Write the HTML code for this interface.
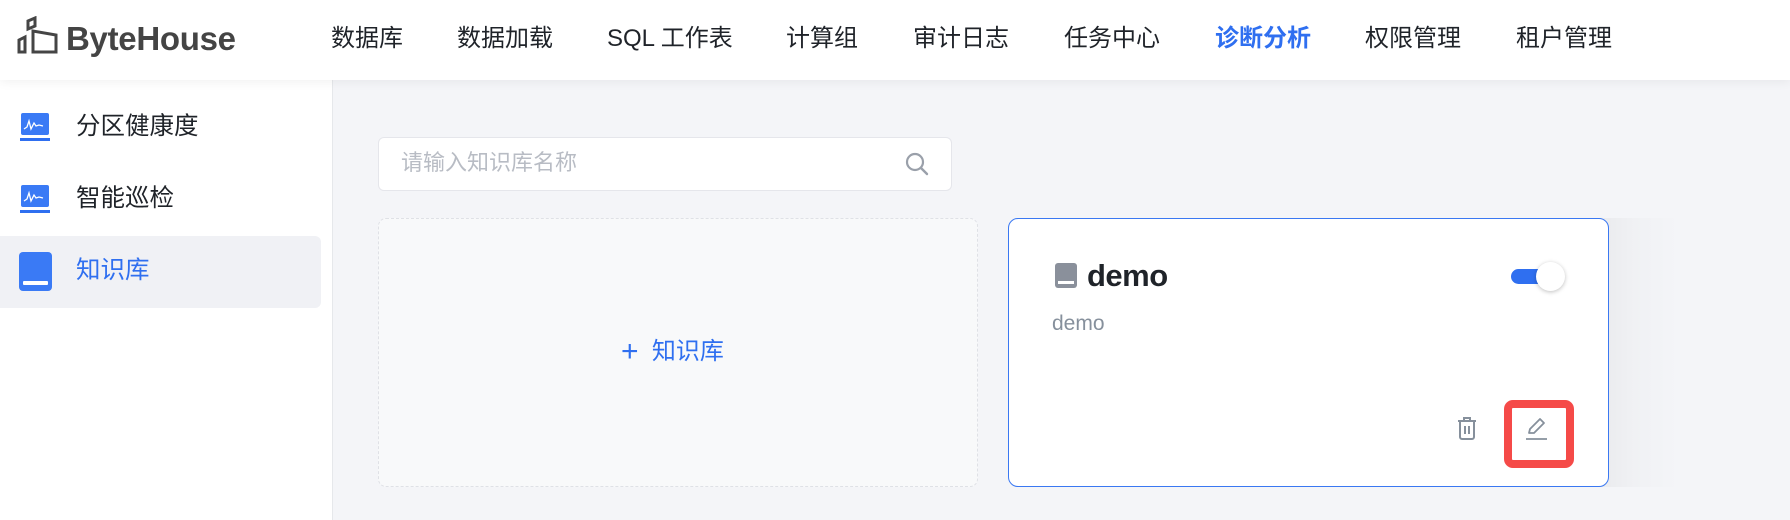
<!DOCTYPE html>
<html><head><meta charset="utf-8"><style>
*{margin:0;padding:0;box-sizing:border-box}
body{width:1790px;height:520px;overflow:hidden;background:#f4f5f8;font-family:"Liberation Sans","Noto Sans CJK SC",sans-serif;position:relative;color:#1f2329}
.hdr{position:absolute;left:0;top:0;width:1790px;height:80px;background:#fff;box-shadow:0 2px 10px rgba(0,0,0,0.06);z-index:2}
.nav{position:absolute;top:22px;font-size:24px;line-height:34px;color:#1f2329;white-space:nowrap}
.side{position:absolute;left:0;top:80px;width:333px;height:440px;background:#fff;border-right:1px solid #e6e8eb}
.si{position:absolute;left:76px;font-size:24.5px;line-height:34px;color:#1f2329}
.abs{position:absolute}
</style></head><body>
<div class="hdr">
 <svg class="abs" style="left:16px;top:16px" width="44" height="38" viewBox="0 0 44 38"><g fill="none" stroke="#454545" stroke-width="3" stroke-linejoin="miter"><path d="M3 36V24l6-3v15z"/><path d="M12 13V5l7-3v8z"/><path d="M17 36V15l23 4v17z"/></g></svg>
 <div class="abs" style="left:66px;top:19px;font-size:33px;line-height:40px;color:#444;font-weight:bold;letter-spacing:-0.3px">ByteHouse</div>
 <div class="nav" style="left:331px">数据库</div>
 <div class="nav" style="left:457px">数据加载</div>
 <div class="nav" style="left:607px">SQL 工作表</div>
 <div class="nav" style="left:786px">计算组</div>
 <div class="nav" style="left:913px">审计日志</div>
 <div class="nav" style="left:1064px">任务中心</div>
 <div class="nav" style="left:1215px;color:#2f6ff0;font-weight:bold">诊断分析</div>
 <div class="nav" style="left:1365px">权限管理</div>
 <div class="nav" style="left:1516px">租户管理</div>
</div>
<div class="side">
 <svg class="abs" style="left:20px;top:33px" width="30" height="29" viewBox="0 0 30 29"><rect x="1" y="0" width="28" height="22" rx="2" fill="#3a7af5"/><path d="M4 16l3-2 2-6 2 8 3-6 2 3 3-1 4 1" stroke="#fff" stroke-width="1.3" fill="none"/><rect x="0" y="25" width="30" height="3" fill="#2f6ff0"/></svg>
 <div class="si" style="top:30px">分区健康度</div>
 <svg class="abs" style="left:20px;top:105px" width="30" height="29" viewBox="0 0 30 29"><rect x="1" y="0" width="28" height="22" rx="2" fill="#3a7af5"/><path d="M4 16l3-2 2-6 2 8 3-6 2 3 3-1 4 1" stroke="#fff" stroke-width="1.3" fill="none"/><rect x="0" y="25" width="30" height="3" fill="#2f6ff0"/></svg>
 <div class="si" style="top:102px">智能巡检</div>
 <div class="abs" style="left:0;top:156px;width:321px;height:72px;background:#f0f1f5;border-radius:0 6px 6px 0"></div>
 <svg class="abs" style="left:19px;top:172px" width="33" height="39" viewBox="0 0 33 39"><rect x="0" y="0" width="33" height="39" rx="4" fill="#3a7af5"/><rect x="4" y="29" width="25" height="4" rx="1" fill="#fff"/></svg>
 <div class="si" style="top:174px;color:#2f6ff0">知识库</div>
</div>
<div class="abs" style="left:378px;top:137px;width:574px;height:54px;background:#fff;border:1px solid #e5e6eb;border-radius:6px"></div>
<div class="abs" style="left:401px;top:147px;font-size:22px;line-height:32px;color:#b8bcc4">请输入知识库名称</div>
<svg class="abs" style="left:904px;top:151px" width="26" height="26" viewBox="0 0 26 26"><circle cx="11" cy="11" r="8" fill="none" stroke="#9aa0aa" stroke-width="2.2"/><path d="M17 17l6 6" stroke="#9aa0aa" stroke-width="2.4" stroke-linecap="round"/></svg>
<div class="abs" style="left:378px;top:218px;width:600px;height:269px;background:#f8f9fa;border:1px dashed #dfe1e6;border-radius:8px"></div>
<div class="abs" style="left:621px;top:335px;font-size:24px;line-height:34px;color:#2f6ff0"><span style="font-size:30px;font-weight:300;vertical-align:-2px">+</span>&nbsp; 知识库</div>
<div class="abs" style="left:1600px;top:218px;width:80px;height:269px;background:linear-gradient(90deg,rgba(0,0,0,0.045),rgba(0,0,0,0.015) 45%,rgba(0,0,0,0))"></div>
<div class="abs" style="left:1008px;top:218px;width:601px;height:269px;background:#fff;border:1.5px solid #3a78f2;border-radius:10px"></div>
<svg class="abs" style="left:1055px;top:263px" width="22" height="25" viewBox="0 0 22 25"><rect width="22" height="25" rx="3" fill="#8a909b"/><rect x="3" y="18" width="16" height="3" fill="#fff"/></svg>
<div class="abs" style="left:1087px;top:257px;font-size:31px;line-height:38px;font-weight:bold;color:#1f2329;letter-spacing:-0.5px">demo</div>
<div class="abs" style="left:1511px;top:269px;width:40px;height:15px;background:#2f6ff0;border-radius:8px"></div>
<div class="abs" style="left:1536px;top:262px;width:29px;height:29px;background:#fff;border-radius:50%;box-shadow:0 1px 4px rgba(0,0,0,0.25)"></div>
<div class="abs" style="left:1052px;top:310px;font-size:21px;line-height:28px;color:#86909c">demo</div>
<svg class="abs" style="left:1456px;top:416px" width="22" height="24" viewBox="0 0 22 24"><g fill="none" stroke="#86909c" stroke-width="2"><path d="M2 5h18M8 5V2h6v3M4 5v16a2 2 0 0 0 2 2h10a2 2 0 0 0 2-2V5M9 10v8M13 10v8"/></g></svg>
<div class="abs" style="left:1504px;top:400px;width:70px;height:68px;border:8px solid #f54a48;border-radius:9px"></div>
<svg class="abs" style="left:1525px;top:417px" width="23" height="23" viewBox="0 0 23 23"><g fill="none" stroke="#86909c" stroke-width="1.8" stroke-linejoin="round"><path d="M4 16l1-4L15 2l4 4L9 16z"/><path d="M1 22h21"/></g></svg>
</body></html>
